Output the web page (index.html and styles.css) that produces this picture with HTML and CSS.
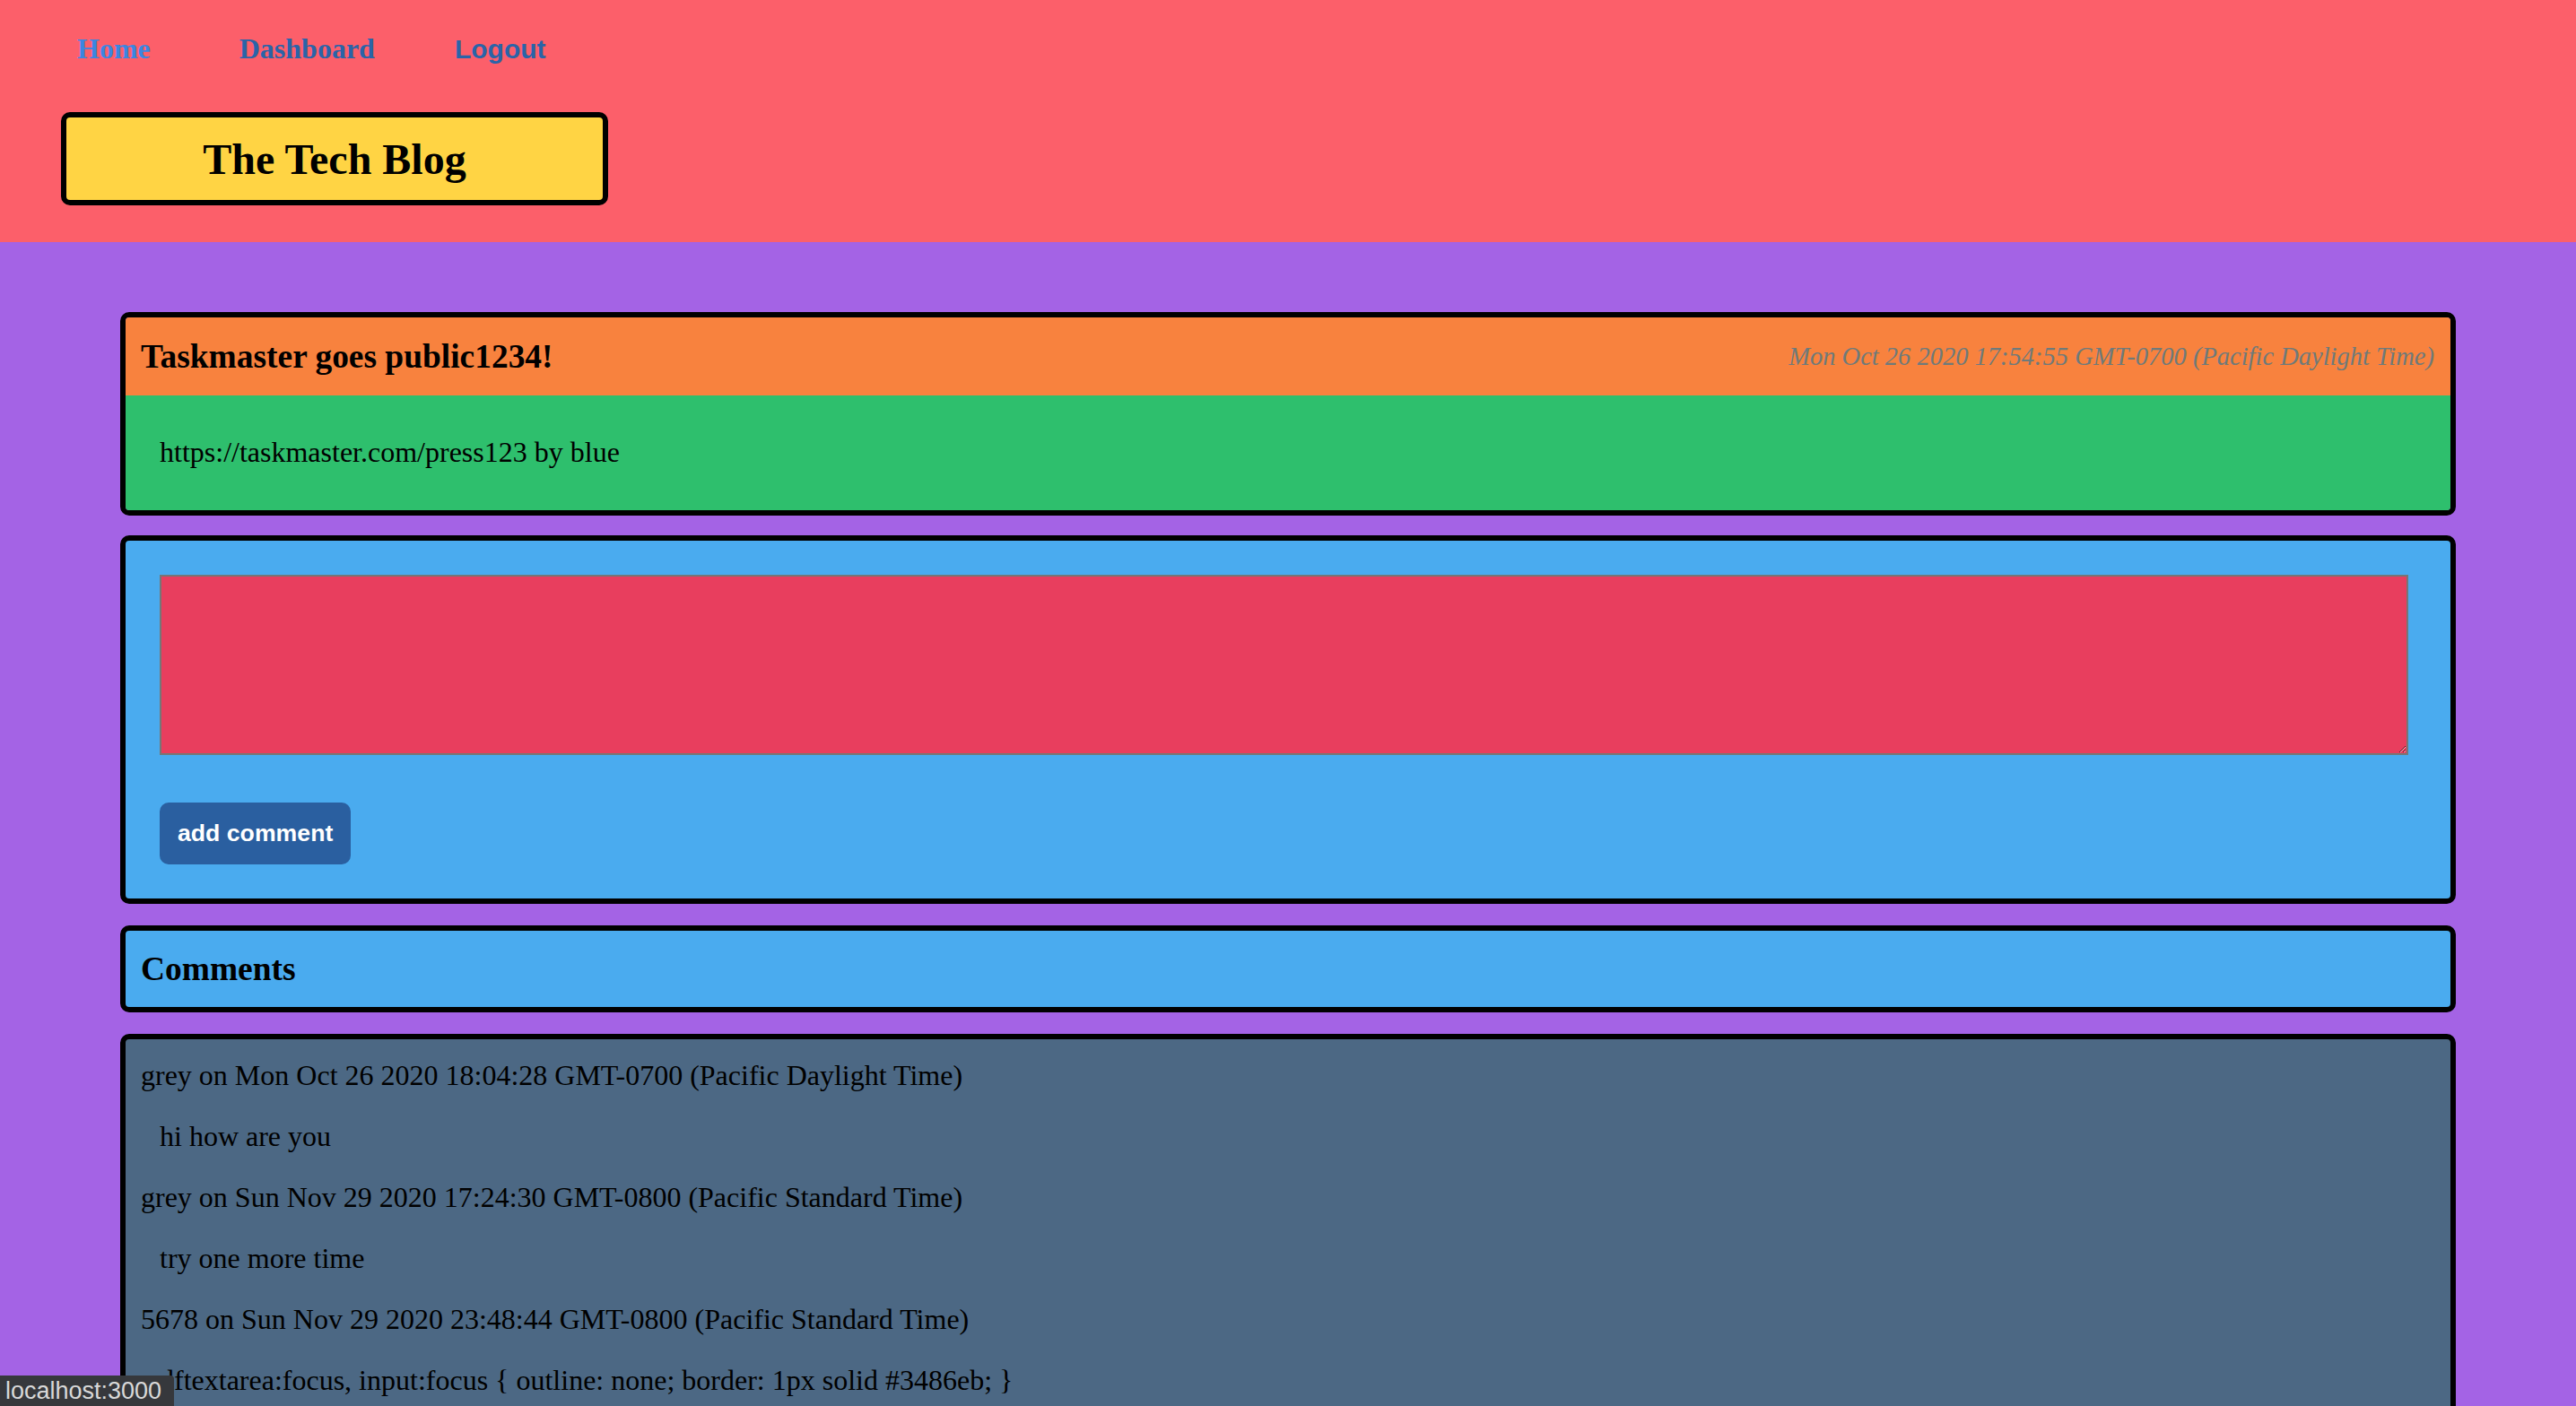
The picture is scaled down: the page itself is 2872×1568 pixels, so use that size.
FILE: index.html
```html
<!DOCTYPE html>
<html>
<head>
<meta charset="utf-8">
<title>The Tech Blog</title>
<link rel="stylesheet" href="styles.css">
</head>
<body>
<header class="header">
  <nav class="nav">
    <a class="nav-link nav-home" href="#">Home</a>
    <a class="nav-link" href="#">Dashboard</a>
    <a class="nav-link nav-logout" href="#">Logout</a>
  </nav>
  <div class="brand">The Tech Blog</div>
</header>
<main class="main">
  <section class="card post">
    <div class="post-head">
      <h3 class="post-title">Taskmaster goes public1234!</h3>
      <span class="post-date">Mon Oct 26 2020 17:54:55 GMT-0700 (Pacific Daylight Time)</span>
    </div>
    <div class="post-body">https://taskmaster.com/press123 by blue</div>
  </section>
  <section class="card form-card">
    <textarea class="comment-input"></textarea>
    <div class="btn-row"><button class="btn">add comment</button></div>
  </section>
  <section class="card comments-head">
    <h3 class="post-title">Comments</h3>
  </section>
  <section class="card comments">
    <p class="c-meta">grey on Mon Oct 26 2020 18:04:28 GMT-0700 (Pacific Daylight Time)</p>
    <p class="c-text">hi how are you</p>
    <p class="c-meta">grey on Sun Nov 29 2020 17:24:30 GMT-0800 (Pacific Standard Time)</p>
    <p class="c-text">try one more time</p>
    <p class="c-meta">5678 on Sun Nov 29 2020 23:48:44 GMT-0800 (Pacific Standard Time)</p>
    <p class="c-text">dftextarea:focus, input:focus { outline: none; border: 1px solid #3486eb; }</p>
  </section>
</main>
<div class="status">localhost:3000</div>
</body>
</html>
```
FILE: styles.css
```css
html, body {
  margin: 0;
  padding: 0;
}
body {
  background: #a463e5;
  font-family: "Liberation Serif", "Times New Roman", serif;
  font-size: 32px;
  color: #000;
}
.header {
  background: #fc5f6a;
  padding: 36px 0 41px 68px;
}
.nav {
  display: flex;
  align-items: center;
  gap: 99px;
  padding-left: 18px;
  height: 37px;
}
.nav-link {
  font-weight: bold;
  font-size: 32px;
  line-height: 37px;
  text-decoration: none;
  color: #2a64a8;
}
.nav-home {
  color: #3b86e0;
}
.nav-logout {
  font-family: "Liberation Sans", Arial, sans-serif;
  font-size: 30px;
  margin-left: -10px;
}
.brand {
  margin-top: 52px;
  box-sizing: border-box;
  width: 610px;
  height: 104px;
  border: 6px solid #000;
  border-radius: 10px;
  background: #ffd444;
  font-weight: bold;
  font-size: 48px;
  display: flex;
  align-items: center;
  justify-content: center;
}
.main {
  padding: 78px 134px 40px;
  display: flex;
  flex-direction: column;
  gap: 24px;
}
.card {
  border: 6px solid #000;
  border-radius: 10px;
  overflow: hidden;
}
.post {
  margin-bottom: -2px;
}
.post-head {
  background: #f8823e;
  display: flex;
  justify-content: space-between;
  align-items: center;
  height: 87px;
  padding: 0 18px 0 17px;
}
.post-title {
  margin: 0;
  font-size: 37.44px;
  font-weight: bold;
  line-height: 43px;
}
.post-date {
  font-style: italic;
  font-size: 28.5px;
  color: #6e7a7a;
}
.post-body {
  background: #2ebf6d;
  padding: 45px 38px 46px;
  line-height: 37px;
}
.form-card {
  background: #4aabef;
  padding: 38px 47px 38px 38px;
}
.comment-input {
  display: block;
  box-sizing: border-box;
  width: 100%;
  height: 201px;
  margin: 0;
  background: #e83e5e;
  border: 2px solid #767676;
  resize: both;
}
.btn-row {
  margin-top: 53px;
}
.btn {
  background: #2a5fa0;
  color: #fff;
  border: none;
  border-radius: 10px;
  font-family: "Liberation Sans", Arial, sans-serif;
  font-weight: bold;
  font-size: 26.67px;
  line-height: 31px;
  padding: 19px 20px;
}
.comments-head {
  background: #4aabef;
  padding: 21px 17px;
}
.comments {
  background: #4c6884;
  padding: 22px 17px 20px;
}
.comments p {
  margin: 0 0 31px;
  line-height: 37px;
}
.comments .c-text {
  padding-left: 21px;
}
.status {
  position: fixed;
  left: 0;
  bottom: 0;
  background: #36383c;
  color: #d8d8d8;
  font-family: "Liberation Sans", Arial, sans-serif;
  font-size: 27px;
  line-height: 34px;
  padding: 0 14px 0 6px;
  border-top-right-radius: 4px;
}
```
